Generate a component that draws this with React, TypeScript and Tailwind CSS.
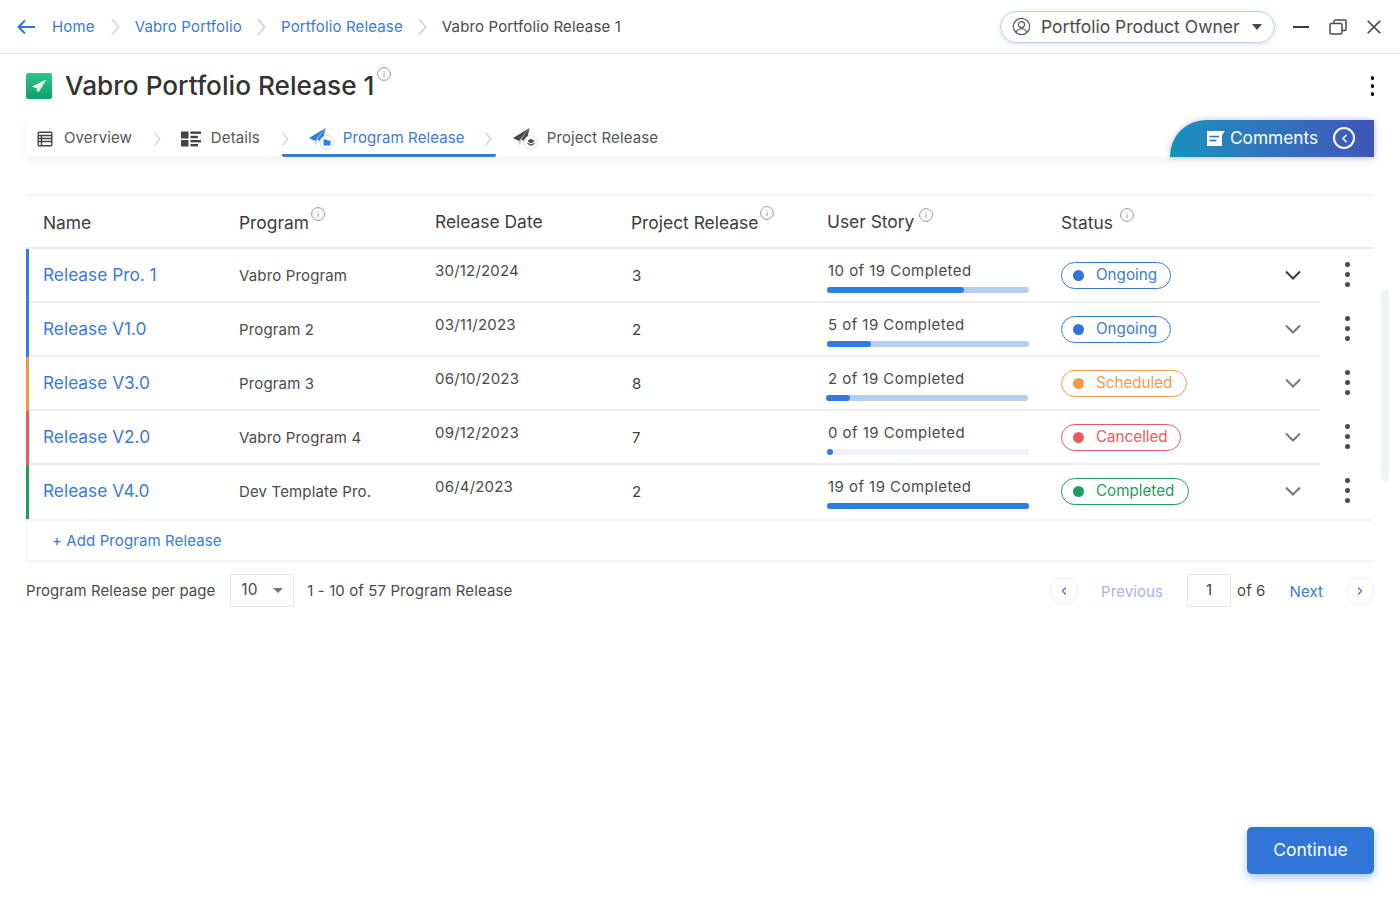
import React from "react";
import { ChevronRight, ChevronLeft } from "lucide-react";

const Info = ({ className = "" }: { className?: string }) => (
  <svg viewBox="0 0 14 14" className={`w-[14px] h-[14px] shrink-0 ${className}`} fill="none" stroke="#8a8a8a" strokeWidth="0.9">
    <circle cx="7" cy="7" r="6.4" />
    <path d="M7 6.200V10M7 4v.9" />
  </svg>
);

const Plane = ({ color, badge }: { color: string; badge: "folder" | "stack" }) => (
  <svg viewBox="0 0 28 24" className="w-[28px] h-[24px] shrink-0">
    <path d="M0 11 16.500 1 6 14z" fill={color} />
    <path d="M16.500 1 13.500 15 8 12.500z" fill={color} />
    <path d="M6 14 8 12.500 7 19z" fill={color} fillOpacity="0.5" />
    <circle cx="18" cy="15.500" r="7" fill="#fff" stroke={badge === "folder" ? "#bcd3f3" : "#d8d8d8"} strokeWidth="0.8" />
    {badge === "folder" ? (
      <path d="M14.500 12.500h3l1 1h3v5h-7z" fill={color} />
    ) : (
      <>
        <path d="M18 11.800l3.800 2.300-3.800 2.300-3.800-2.300z" fill={color} />
        <path d="M14.500 16.300l3.500 2 3.500-2" fill="none" stroke={color} strokeWidth="1.200" />
      </>
    )}
  </svg>
);

const Sep = ({ className = "w-[20px] h-[20px]" }: { className?: string }) => (
  <svg viewBox="0 0 20 20" className={`shrink-0 ${className}`} fill="none" stroke="#d4d4d4" strokeWidth="1.800">
    <path d="M7 2l6.500 8L7 18" />
  </svg>
);

const Kebab = ({ dot = "w-[5px] h-[5px]", gap = "gap-[5px]", color = "bg-[#4a4a4a]" }: { dot?: string; gap?: string; color?: string }) => (
  <div className={`flex flex-col ${gap}`}>
    <span className={`${dot} ${color} rounded-full`} />
    <span className={`${dot} ${color} rounded-full`} />
    <span className={`${dot} ${color} rounded-full`} />
  </div>
);

type Row = {
  name: string;
  program: string;
  date: string;
  project: string;
  story: string;
  pct: number;
  barLeft: number;
  track: string;
  status: string;
  bar: string;
  pill: string;
  dot: string;
  width: string;
  chev: string;
};

const rows: Row[] = [
  { name: "Release Pro. 1", program: "Vabro Program", date: "30/12/2024", project: "3", story: "10 of 19 Completed", pct: 68, barLeft: 0, track: "bg-[#b5cdf0]", status: "Ongoing", bar: "border-l-[#2f7de1]", pill: "border-[#3a7bd5] text-[#3a7bd5]", dot: "bg-[#2f74dc]", width: "w-[110px]", chev: "#3a3a3a" },
  { name: "Release V1.0", program: "Program 2", date: "03/11/2023", project: "2", story: "5 of 19 Completed", pct: 22, barLeft: 0, track: "bg-[#b5cdf0]", status: "Ongoing", bar: "border-l-[#2f7de1]", pill: "border-[#3a7bd5] text-[#3a7bd5]", dot: "bg-[#2f74dc]", width: "w-[110px]", chev: "#777777" },
  { name: "Release V3.0", program: "Program 3", date: "06/10/2023", project: "8", story: "2 of 19 Completed", pct: 12, barLeft: -1, track: "bg-[#b5cdf0]", status: "Scheduled", bar: "border-l-[#ee9a4d]", pill: "border-[#ee9a4d] text-[#ee9a4d]", dot: "bg-[#ee9a4d]", width: "w-[126px]", chev: "#777777" },
  { name: "Release V2.0", program: "Vabro Program 4", date: "09/12/2023", project: "7", story: "0 of 19 Completed", pct: 3, barLeft: 0, track: "bg-[#edf2fb]", status: "Cancelled", bar: "border-l-[#e85a5f]", pill: "border-[#e85a5f] text-[#e85a5f]", dot: "bg-[#e85a5f]", width: "w-[120px]", chev: "#777777" },
  { name: "Release V4.0", program: "Dev Template Pro.", date: "06/4/2023", project: "2", story: "19 of 19 Completed", pct: 100, barLeft: 0, track: "bg-[#b5cdf0]", status: "Completed", bar: "border-l-[#1f9d5c]", pill: "border-[#1f9d5c] text-[#1f9d5c]", dot: "bg-[#1f9d5c]", width: "w-[128px]", chev: "#777777" },
];

const gridCols = "grid grid-cols-[197px_196px_196px_196px_234px_232px_54px_40px]";

export default function App() {
  return (
    <div className="relative w-[1400px] h-[900px] bg-white overflow-hidden text-[#3d3d3d] font-['Inter',sans-serif]">
      <header className="h-[54px] border-b border-[#e3e5e8] flex items-center pl-[17px] pr-[19px]">
        <svg viewBox="0 0 18 16" className="w-[18px] h-[16px] shrink-0" fill="none" stroke="#2f74dc" strokeWidth="2">
          <path d="M18 8H1.500M8 1.500 1.500 8 8 14.500" />
        </svg>
        <nav className="flex items-center ml-[17px] mt-[2px] text-[15px] tracking-[0.15px]">
          <span className="text-[#3a7bd5]">Home</span>
          <Sep className="w-[20px] h-[20px] mx-[10px] -mt-[1px]" />
          <span className="text-[#3a7bd5]">Vabro Portfolio</span>
          <Sep className="w-[20px] h-[20px] mx-[9.500px] -mt-[1px]" />
          <span className="text-[#3a7bd5]">Portfolio Release</span>
          <Sep className="w-[20px] h-[20px] mx-[9.500px] -mt-[1px]" />
          <span className="text-[#4a4a4a]">Vabro Portfolio Release 1</span>
        </nav>
        <div className="ml-auto flex items-center">
          <div className="w-[275px] h-[32px] rounded-full border border-[#b5cdf0] shadow-[0_2px_5px_rgba(0,0,0,0.10)] flex items-center pl-[11px] pr-[12px]">
            <svg viewBox="0 0 20 20" className="w-[19px] h-[19px] shrink-0" fill="none" stroke="#555" strokeWidth="1.200">
              <circle cx="10" cy="10" r="8.600" />
              <circle cx="10" cy="8" r="3.200" />
              <path d="M4.400 16c1-2.600 3-3.600 5.600-3.600s4.600 1 5.600 3.600" />
            </svg>
            <span className="ml-[10px] pt-[1px] text-[17.5px] text-[#4a4a4a] whitespace-nowrap">Portfolio Product Owner</span>
            <span className="ml-auto w-0 h-0 border-x-[5.5px] border-x-transparent border-t-[6px] border-t-[#4a4a4a]" />
          </div>
          <svg viewBox="0 0 16 4" className="w-[16px] h-[4px] ml-[18px]" fill="none" stroke="#3d3d3d" strokeWidth="2">
            <path d="M0 2h16" />
          </svg>
          <svg viewBox="0 0 18 16" className="w-[18px] h-[16px] ml-[20px]" fill="none" stroke="#4a4a4a" strokeWidth="1.500">
            <rect x="1" y="4.500" width="12" height="10.500" rx="1.500" />
            <path d="M5 4.500V2.500A1.500 1.500 0 0 1 6.500 1H16a1 1 0 0 1 1 1v8a1.500 1.500 0 0 1-1.500 1.500H13" />
          </svg>
          <svg viewBox="0 0 14 14" className="w-[14px] h-[14px] ml-[20px]" fill="none" stroke="#3d3d3d" strokeWidth="1.500">
            <path d="M.7.700l12.600 12.600M13.300.700.7 13.300" />
          </svg>
        </div>
      </header>

      <div className="flex items-center h-[64px] pl-[26px] pr-[26px]">
        <div className="w-[26px] h-[26px] rounded-[2px] bg-gradient-to-b from-[#2fc78a] to-[#0f9d6e] shrink-0">
          <svg viewBox="0 0 26 26" className="w-[26px] h-[26px]">
            <path d="M20.500 6.500 6 13.500 11 15.500z" fill="#fff" />
            <path d="M20.500 6.500 11 15.500 12.500 19.500z" fill="#fff" fillOpacity="0.85" />
            <path d="M11 15.500 12.500 19.500 10 18z" fill="#fff" fillOpacity="0.5" />
          </svg>
        </div>
        <h1 className="ml-[13px] text-[26.200px] leading-none font-medium text-[#333333] whitespace-nowrap">Vabro Portfolio Release 1</h1>
        <Info className="ml-[3px] -mt-[24px]" />
        <div className="ml-auto">
          <Kebab dot="w-[3.500px] h-[3.500px]" gap="gap-[4.500px]" color="bg-black" />
        </div>
      </div>

      <div className="mx-[26px] mt-[2px] h-[37px] flex items-stretch shadow-[0_5px_8px_rgba(0,0,0,0.05)] text-[15px] tracking-[0.1px]">
        <div className="flex items-center pl-[11px] text-[#555555]">
          <svg viewBox="0 0 16 16" className="w-[16px] h-[16px] shrink-0" fill="none" stroke="#444" strokeWidth="1.400">
            <rect x="1.200" y="1.200" width="13.600" height="13.600" rx="1" />
            <path d="M1.200 4.500h13.600M1.200 7.500h13.600M1.200 10.500h13.600M4.500 4.500v10" />
          </svg>
          <span className="ml-[11px]">Overview</span>
          <Sep className="w-[16px] h-[16px] ml-[17px]" />
          <svg viewBox="0 0 20 16" className="w-[20px] h-[16px] ml-[16px] shrink-0" fill="#444">
            <rect x="0" y="0.500" width="7.500" height="7" />
            <rect x="0" y="9" width="7.500" height="6.500" />
            <rect x="9.500" y="0.500" width="10.500" height="2.400" />
            <rect x="9.500" y="4.800" width="7.500" height="2.400" />
            <rect x="9.500" y="9" width="10.500" height="2.400" />
            <rect x="9.500" y="13" width="7.500" height="2.400" />
          </svg>
          <span className="ml-[10px]">Details</span>
          <Sep className="w-[16px] h-[16px] ml-[17px]" />
        </div>
        <div className="w-[214px] -ml-[11px] h-[37px] border-b-[3px] border-[#3a7bd5] rounded-b-[2px] flex items-center pt-[3px] pl-[27px] text-[#3a7bd5]">
          <Plane color="#2f7de1" badge="folder" />
          <span className="ml-[6px] whitespace-nowrap">Program Release</span>
          <Sep className="w-[16px] h-[16px] ml-[15px] -mr-[20px]" />
        </div>
        <div className="flex items-center pl-[17px] text-[#555555]">
          <Plane color="#4a4a4a" badge="stack" />
          <span className="ml-[6px] whitespace-nowrap">Project Release</span>
        </div>
        <div className="ml-auto w-[204px] h-[37px] pb-[1px] rounded-tl-[36px] bg-gradient-to-r from-[#1590bf] to-[#3d56b9] shadow-[0_0_6px_rgba(61,86,185,0.35)] flex items-center pl-[37px] text-white text-[17.300px] tracking-normal">
          <svg viewBox="0 0 18 15" className="w-[18px] h-[15px] shrink-0" fill="#fff">
            <path d="M0 0h18l-3 4v11H0z" />
            <path d="M2.500 5.500h9.500M2.500 9.500h7" stroke="#2a72bd" strokeWidth="1.500" />
          </svg>
          <span className="ml-[5px]">Comments</span>
          <span className="ml-[15px] w-[22px] h-[22px] rounded-full border-2 border-white flex items-center justify-center">
            <ChevronLeft className="w-[13px] h-[13px]" strokeWidth={3} />
          </span>
        </div>
      </div>

      <section className="mx-[26px] mt-[37px] border-t-2 border-[#f5f5f6]">
        <div className={`${gridCols} h-[53px] pt-[3px] items-center text-[17.400px] text-[#3d3d3d] border-b-2 border-[#ececee]`}>
          <div className="pl-[17px]">Name</div>
          <div className="pl-[16px] flex items-start">
            <span>Program</span>
            <Info className="ml-[2px] -mt-[3px]" />
          </div>
          <div className="pl-[16px] -mt-[2px]">Release Date</div>
          <div className="pl-[16px] flex items-start">
            <span>Project Release</span>
            <Info className="ml-[2px] -mt-[4px]" />
          </div>
          <div className="pl-[16px] flex items-start">
            <span className="-mt-[1px]">User Story</span>
            <Info className="ml-[5px] -mt-[2px]" />
          </div>
          <div className="pl-[16px] flex items-start">
            <span>Status</span>
            <Info className="ml-[7px] -mt-[2px]" />
          </div>
        </div>

        {rows.map((r, i) => (
          <div key={r.name} className={`${gridCols} h-[54px] items-center border-l-[3px] ${r.bar} relative`}>
            <div className="pl-[14px] pb-[2px] text-[17.300px] text-[#3a7bd5] whitespace-nowrap">{r.name}</div>
            <div className="pl-[13px] text-[15px] tracking-[0.15px] text-[#4a4a4a] whitespace-nowrap">{r.program}</div>
            <div className="pl-[13px] pb-[10px] text-[15px] tracking-[0.2px] text-[#4a4a4a]">{r.date}</div>
            <div className="pl-[14px] text-[15px] text-[#3d3d3d]">{r.project}</div>
            <div className="pl-[13px] pr-[27px] pt-[2px]">
              <div className="pl-[1px] text-[15px] leading-[18px] text-[#4a4a4a] whitespace-nowrap tracking-[0.45px]">{r.story}</div>
              <div className={`mt-[7px] h-[6px] rounded-full ${r.track} w-[202px]`} style={{ marginLeft: r.barLeft }}>
                <div className="h-full rounded-full bg-[#2f7de1]" style={{ width: `${r.pct}%` }} />
              </div>
            </div>
            <div className="pl-[13px] pb-[2px]">
              <div className={`${r.width} h-[27px] rounded-full border ${r.pill} flex items-center pl-[11px] text-[15.200px]`}>
                <span className={`w-[11px] h-[11px] rounded-full ${r.dot}`} />
                <span className="ml-[12px]">{r.status}</span>
              </div>
            </div>
            <div className="flex justify-start pl-[5px] pb-[2px]">
              <svg viewBox="0 0 16 10" className="w-[16px] h-[10px]" fill="none" stroke={r.chev} strokeWidth="2">
                <path d="M1 1.500l7 7 7-7" />
              </svg>
            </div>
            <div className="pl-[11px] pb-[4px]">
              <Kebab />
            </div>
            {i < 4 && <div className="absolute left-0 right-[54px] bottom-0 h-[2px] bg-[#ececee]" />}
          </div>
        ))}

        <div className="h-[43px] pt-[2px] border-y-2 border-[#f3f4f6] border-l border-l-[#f3f4f6] flex items-center pl-[25px] text-[15px] tracking-[0.1px] text-[#3a7bd5]">
          + Add Program Release
        </div>
      </section>

      <div className="mx-[26px] mt-[12px] h-[34px] flex items-center text-[15px] tracking-[0.1px] text-[#4a4a4a]">
        <span className="tracking-[0.05px]">Program Release per page</span>
        <div className="ml-[15px] mb-[2px] w-[64px] h-[33px] rounded-[2px] border border-[#e3e5e8] flex items-center pl-[10px] pr-[10px]">
          <span className="text-[15.500px]">10</span>
          <span className="ml-auto w-0 h-0 border-x-[5px] border-x-transparent border-t-[5.500px] border-t-[#777777]" />
        </div>
        <span className="ml-[13px]">1 - 10 of 57 Program Release</span>
        <div className="ml-auto flex items-center">
          <span className="w-[28px] h-[28px] rounded-full border border-[#eeeff2] flex items-center justify-center">
            <ChevronLeft className="w-[12px] h-[12px] text-[#2f74dc]" strokeWidth={2.600} />
          </span>
          <span className="ml-[23px] pt-[2px] text-[#a5b4ec]">Previous</span>
          <span className="ml-[24px] mb-[2px] w-[44px] h-[33px] rounded-[2px] border border-[#e3e5e8] flex items-center justify-center text-[#3d3d3d]">1</span>
          <span className="ml-[6px]">of 6</span>
          <span className="ml-[24px] pt-[2px] text-[#3a7bd5]">Next</span>
          <span className="ml-[23px] w-[28px] h-[28px] rounded-full border border-[#eeeff2] flex items-center justify-center">
            <ChevronRight className="w-[12px] h-[12px] text-[#2f74dc]" strokeWidth={2.600} />
          </span>
        </div>
      </div>

      <div className="absolute left-[1381px] top-[290px] w-[8px] h-[191px] rounded-full bg-[#f2f3f4]" />

      <button className="absolute left-[1247px] top-[827px] w-[127px] h-[47px] rounded-[5px] bg-[#3075d8] text-white text-[17.500px] shadow-[0_4px_10px_rgba(47,116,220,0.4)]">
        Continue
      </button>
    </div>
  );
}
